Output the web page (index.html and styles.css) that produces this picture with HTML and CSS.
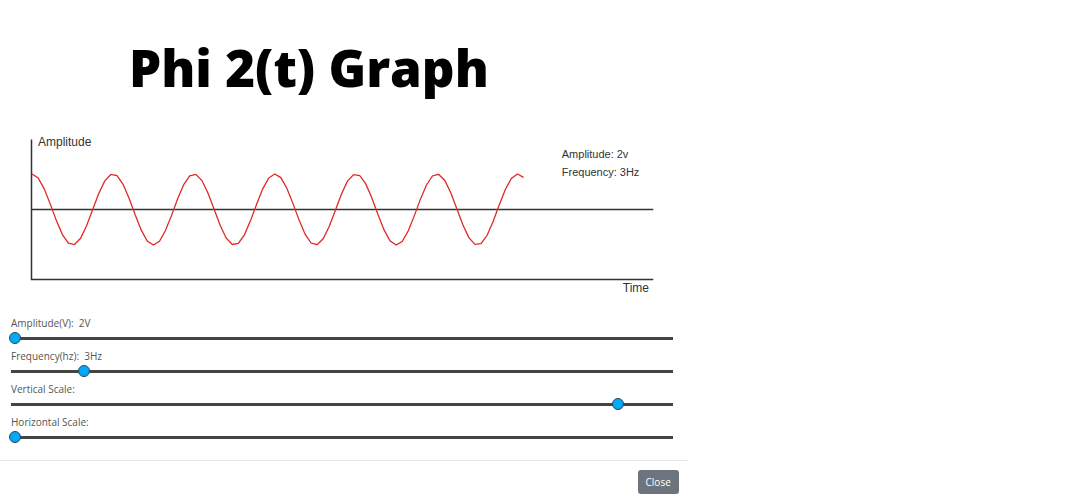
FILE: index.html
```html
<!DOCTYPE html>
<html lang="en">
<head>
<meta charset="utf-8">
<meta name="viewport" content="width=device-width, initial-scale=1">
<title>Phi 2(t) Graph</title>
<link rel="stylesheet" href="styles.css">
</head>
<body>
<main class="panel">
  <h1 class="title">Phi 2(t) Graph</h1>
  <svg class="chart" viewBox="0 0 688 170" role="img" aria-label="Phi 2(t) waveform">
    <path class="axis" d="M31.5 9.5V149.5H653.5M31.5 79.5H653.5"/>
    <polyline class="wave" id="wave"/>
    <text class="chart-label" x="38" y="16">Amplitude</text>
    <text class="chart-label" x="623" y="162">Time</text>
    <text class="chart-note" x="562" y="28">Amplitude: 2v</text>
    <text class="chart-note" x="562" y="46">Frequency: 3Hz</text>
  </svg>
  <form class="controls">
    <div class="control">
      <label for="amplitude">Amplitude(V):&nbsp; 2V</label>
      <input class="slider" id="amplitude" type="range" min="2" max="20" value="2">
    </div>
    <div class="control">
      <label for="frequency">Frequency(hz):&nbsp; 3Hz</label>
      <input class="slider" id="frequency" type="range" min="0" max="1000" value="105">
    </div>
    <div class="control">
      <label for="vertical">Vertical Scale:</label>
      <input class="slider" id="vertical" type="range" min="0" max="1000" value="923">
    </div>
    <div class="control">
      <label for="horizontal">Horizontal Scale:</label>
      <input class="slider" id="horizontal" type="range" min="0" max="100" value="0">
    </div>
  </form>
  <footer class="footer">
    <button class="close" type="button">Close</button>
  </footer>
</main>
<script src="wave.js"></script>
</body>
</html>
```
FILE: styles.css
```css
* { box-sizing: border-box; }
body {
  margin: 0;
  background: #fff;
  color: #555;
  font-family: "Open Sans", "Noto Sans", sans-serif;
}
.panel { width: 64.1%; }
.title {
  margin: 0;
  padding: 33px 70px 29px 0;
  color: #000;
  font-size: 51px;
  font-weight: 800;
  line-height: 68px;
  text-align: center;
}
.chart { display: block; width: 100%; }
.axis { fill: none; stroke: #333; stroke-width: 1.5; }
.wave { fill: none; stroke: #e02828; stroke-width: 1.3; }
.chart-label, .chart-note {
  fill: #333;
  font-family: "Liberation Sans", Arial, sans-serif;
  font-size: 12px;
}
.chart-note { font-size: 11px; }
.controls {
  display: flex;
  flex-direction: column;
  gap: 2px;
  padding: 16px 13px 14px 9px;
}
.control {
  display: flex;
  flex-direction: column;
  font-size: 10px;
  line-height: 14px;
}
.control label { padding-left: 2px; }
.slider {
  appearance: none;
  width: 100%;
  height: 17px;
  margin: 0;
  background: linear-gradient(#444, #444) center / calc(100% - 4px) 3px no-repeat;
}
.slider::-webkit-slider-thumb {
  appearance: none;
  width: 12px;
  height: 12px;
  border: 1px solid #234a60;
  border-radius: 50%;
  background: #03a9f4;
}
.footer {
  display: flex;
  justify-content: flex-end;
  padding: 9px;
  border-top: 1px solid #e5e5e5;
}
.close {
  padding: 4px 8px;
  border: 0;
  border-radius: 3px;
  background: #6c757d;
  color: #fff;
  font-family: inherit;
  font-size: 10px;
  line-height: 16px;
}
```
FILE: wave.js
```js
const samples = 82;
const step = 6.07;
const period = 81;
const points = Array.from({ length: samples }, (_, i) => {
  const x = i * step;
  const y = 79.5 - 35.5 * Math.cos((2 * Math.PI * x) / period);
  return `${(32 + x).toFixed(1)},${y.toFixed(1)}`;
});
document.getElementById("wave").setAttribute("points", points.join(" "));
```
